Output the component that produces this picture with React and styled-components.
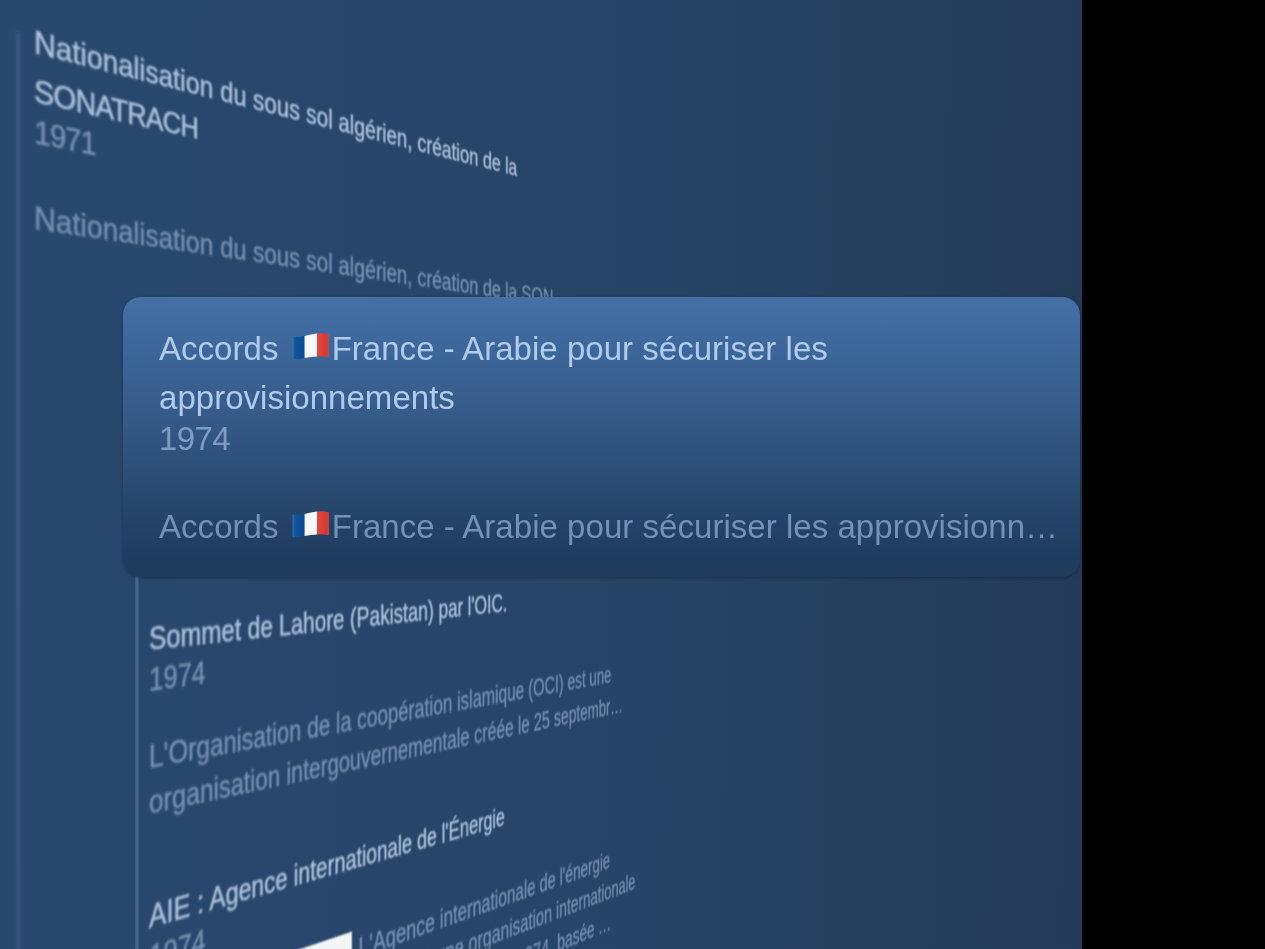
import React from "react";
import styled, { createGlobalStyle } from "styled-components";

const GlobalStyle = createGlobalStyle`
  body { margin: 0; background: #000; overflow: hidden; }
`;

const Screen = styled.div`
  display: flex;
  width: 100vw;
  height: 949px;
  overflow: hidden;
  background: #000;
  font-family: "Liberation Sans", Arial, sans-serif;
  font-size: 33px;
`;

const Stage = styled.main`
  display: flex;
  flex-direction: column;
  width: 1082px;
  height: 949px;
  overflow: hidden;
  background: linear-gradient(91deg, #29486d 0%, #28466b 35%, #264465 60%, #25405f 78%, #233a58 100%);
`;

/* A timeline column that recedes toward a vanishing point on the right. */
const Column = styled.section`
  box-sizing: border-box;
  flex: none;
  height: ${(p) => p.$height}px;
  margin-left: ${(p) => p.$left}px;
  padding-top: ${(p) => p.$top}px;
  transform-origin: 0 ${(p) => p.$horizon}px;
  transform: matrix3d(${(p) => p.$squeeze}, 0, 0, ${(p) => p.$depth}, 0, 1, 0, 0, 0, 0, 1, 0, 0, 0, 0, 1);
  display: flex;
  align-items: flex-start;
  white-space: nowrap;
`;

const Rail = styled.div`
  flex: none;
  width: ${(p) => p.$width}px;
  height: 960px;
  margin-left: ${(p) => -p.$offset}px;
  margin-right: ${(p) => p.$offset - p.$width}px;
  margin-top: ${(p) => p.$shift}px;
  background: ${(p) => p.$color};
  filter: blur(${(p) => p.$blur}px);
`;

const Events = styled.div`
  display: flex;
  flex-direction: column;
  gap: 67px;
  filter: blur(${(p) => p.$blur}px);
`;

const Event = styled.article`
  display: flex;
  flex-direction: column;
`;

const Title = styled.div`
  line-height: 49px;
  color: ${(p) => (p.$bright ? "#b1cbee" : "#abc0dc")};
  letter-spacing: ${(p) => (p.$bright ? 0.03 : 0)}px;
  -webkit-text-stroke: ${(p) => (p.$bright ? 0 : 0.6)}px currentColor;
`;

const Tight = styled.span`
  letter-spacing: -1px;
`;

const Year = styled.div`
  line-height: 33px;
  color: ${(p) => (p.$bright ? "#7e9cc3" : "#7690b1")};
  letter-spacing: ${(p) => p.$track || 0}px;
  -webkit-text-stroke: ${(p) => (p.$bright ? 0 : 0.4)}px currentColor;
`;

const Summary = styled.div`
  display: flex;
  gap: 11px;
  margin-top: ${(p) => p.$gap}px;
  line-height: ${(p) => p.$leading || 44.5}px;
  color: ${(p) => (p.$bright ? "#7490b4" : "#7690b1")};
  letter-spacing: ${(p) => (p.$bright ? 0.04 : 0)}px;
  -webkit-text-stroke: ${(p) => (p.$bright ? 0 : 0.4)}px currentColor;
`;

const Thumb = styled.div`
  width: 293px;
  height: 220px;
  background: #f4f5f7;
`;

const Card = styled.article`
  position: relative;
  z-index: 1;
  box-sizing: border-box;
  flex: none;
  width: 957px;
  height: 280px;
  margin-left: 123px;
  padding: 27px 0 0 36px;
  border-radius: 18px;
  white-space: nowrap;
  background: linear-gradient(180deg, #4470a6 0%, #3e689c 16%, #345985 45%, #28486e 72%, #1f3b5f 93%, #203b5b 100%);
  box-shadow: 0 1px 3px rgba(12, 28, 50, 0.5);
`;

const FlagIcon = styled.svg`
  width: 38px;
  height: 29px;
  margin: 0 2px 0 4px;
  vertical-align: -1px;
`;

function Flag() {
  return (
    <FlagIcon viewBox="0 0 38 29">
      <defs>
        <linearGradient id="flagBlue"><stop offset="0" stopColor="#3a70ad" /><stop offset=".2" stopColor="#10549d" /><stop offset="1" stopColor="#0b4c93" /></linearGradient>
        <linearGradient id="flagRed"><stop offset="0" stopColor="#e04a40" /><stop offset=".75" stopColor="#d93830" /><stop offset="1" stopColor="#b94a50" /></linearGradient>
      </defs>
      <path d="M.6 4.2 Q7 5.4 12.6 4 V26 Q7 27.8 .6 27Z" fill="url(#flagBlue)" />
      <path d="M12.6 4 Q19 2 25 1.4 V24.5 Q19 24.7 12.6 26Z" fill="#f8f8fa" />
      <path d="M25 1.4 Q32 .6 37 2.4 V25.4 Q31 23.8 25 24.5Z" fill="url(#flagRed)" />
    </FlagIcon>
  );
}

export default function App() {
  return (
    <>
      <GlobalStyle />
      <Screen>
        <Stage>
          <Column $height={297} $left={34} $top={17} $horizon={472} $squeeze={0.93} $depth={0.0005656}>
            <Rail $width={6} $offset={20} $shift={19} $color="#35537b" $blur={1.5} />
            <Events $blur={1.3}>
              <Event>
                <Title>Nationalisation du sous sol algérien, création de la<br /><Tight>SONATRACH</Tight></Title>
                <Year $track={-1.2}>1971</Year>
                <Summary $gap={48}>Nationalisation du sous sol algérien, création de la SON</Summary>
              </Event>
            </Events>
          </Column>
          <Card>
            <Title $bright>Accords <Flag />France - Arabie pour sécuriser les<br />approvisionnements</Title>
            <Year $bright $track={-0.6}>1974</Year>
            <Summary $bright $gap={49.5}>
              <span>Accords <Flag />France - Arabie pour sécuriser les approvisionn…</span>
            </Summary>
          </Card>
          <Column $height={372} $left={149} $top={37} $horizon={-93} $squeeze={0.798} $depth={0.0005214}>
            <Rail $width={4} $offset={17} $shift={-60} $color="#44648c" $blur={0.7} />
            <Events $blur={1.05}>
              <Event>
                <Title>Sommet de Lahore (Pakistan) par l'OIC.</Title>
                <Year>1974</Year>
                <Summary $gap={38} $leading={45.5}>
                  <div>
                    L'Organisation de la coopération islamique (OCI) est une<br />
                    organisation intergouvernementale créée le 25 septembr…
                  </div>
                </Summary>
              </Event>
              <Event>
                <Title>AIE : Agence internationale de l'Énergie</Title>
                <Year>1974</Year>
                <Summary $gap={25.5}>
                  <Thumb />
                  <div>
                    L'Agence internationale de l'énergie<br />
                    (AIE) est une organisation internationale<br />
                    fondée à l'OCDE en 1974, basée …
                  </div>
                </Summary>
              </Event>
            </Events>
          </Column>
        </Stage>
      </Screen>
    </>
  );
}
